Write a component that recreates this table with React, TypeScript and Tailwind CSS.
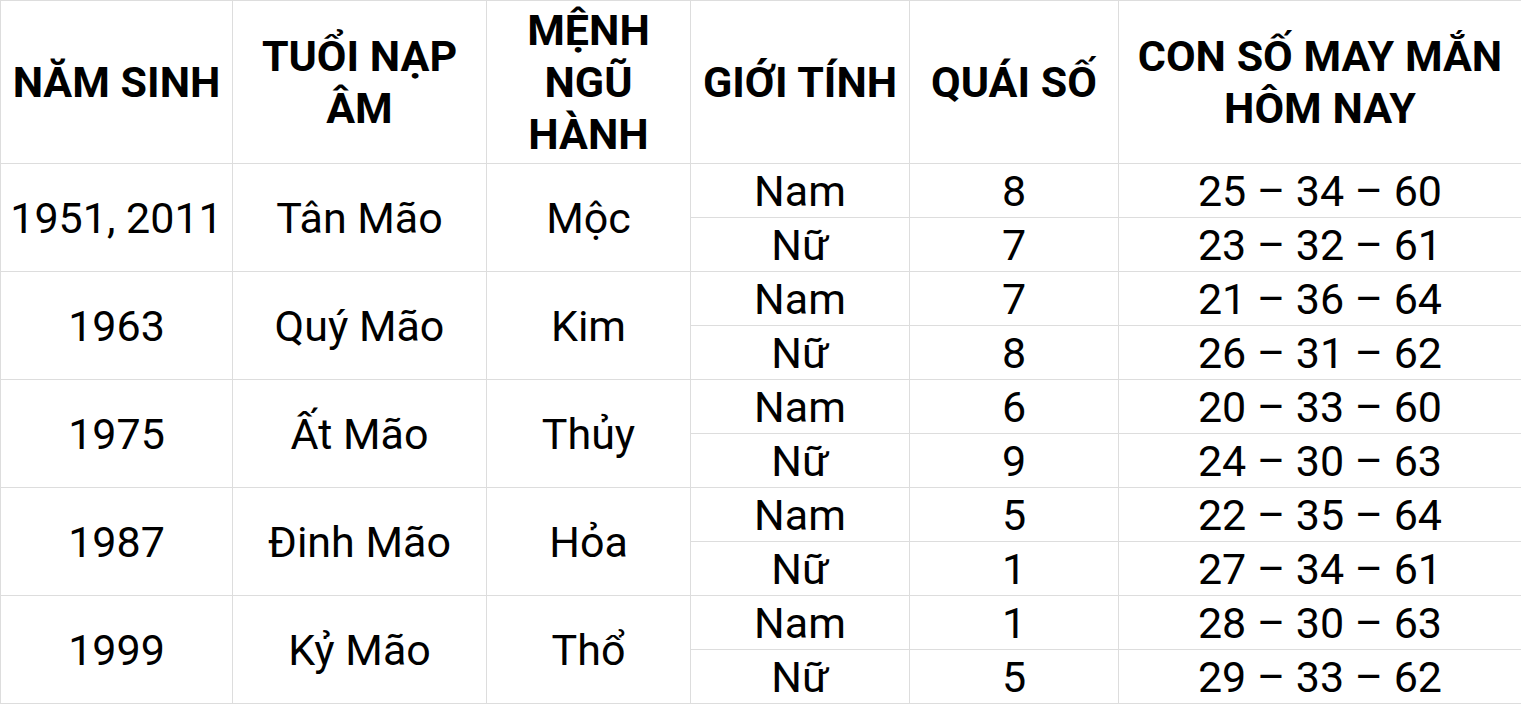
import React from "react";

const groups = [
  { year: "1951, 2011", tuoi: "Tân Mão", menh: "Mộc", rows: [["Nam", "8", "25 – 34 – 60"], ["Nữ", "7", "23 – 32 – 61"]] },
  { year: "1963", tuoi: "Quý Mão", menh: "Kim", rows: [["Nam", "7", "21 – 36 – 64"], ["Nữ", "8", "26 – 31 – 62"]] },
  { year: "1975", tuoi: "Ất Mão", menh: "Thủy", rows: [["Nam", "6", "20 – 33 – 60"], ["Nữ", "9", "24 – 30 – 63"]] },
  { year: "1987", tuoi: "Đinh Mão", menh: "Hỏa", rows: [["Nam", "5", "22 – 35 – 64"], ["Nữ", "1", "27 – 34 – 61"]] },
  { year: "1999", tuoi: "Kỷ Mão", menh: "Thổ", rows: [["Nam", "1", "28 – 30 – 63"], ["Nữ", "5", "29 – 33 – 62"]] },
];

export default function App() {
  const th = "border border-[#dddddd] px-1 text-center align-middle font-bold text-[43px] leading-[52px]";
  const td = "border border-[#dddddd] px-1 text-center align-middle font-normal text-[43px] leading-[52px] p-0";
  return (
    <div className="w-[1521px] h-[704px] bg-white text-black overflow-hidden" style={{ fontFamily: "Roboto, 'Noto Sans', sans-serif" }}>
      <table className="w-[1521px] table-fixed border-collapse">
        <colgroup>
          <col className="w-[232px]" />
          <col className="w-[254px]" />
          <col className="w-[204px]" />
          <col className="w-[219px]" />
          <col className="w-[209px]" />
          <col className="w-[403px]" />
        </colgroup>
        <thead>
          <tr className="h-[163px]">
            <th className={th}>NĂM SINH</th>
            <th className={th}>TUỔI NẠP ÂM</th>
            <th className={th}>MỆNH NGŨ HÀNH</th>
            <th className={th}>GIỚI TÍNH</th>
            <th className={th}>QUÁI SỐ</th>
            <th className={th}>CON SỐ MAY MẮN HÔM NAY</th>
          </tr>
        </thead>
        <tbody>
          {groups.map((g) => (
            <React.Fragment key={g.year}>
              <tr className="h-[54px]">
                <td rowSpan={2} className={td}>{g.year}</td>
                <td rowSpan={2} className={td}>{g.tuoi}</td>
                <td rowSpan={2} className={td}>{g.menh}</td>
                <td className={td}>{g.rows[0][0]}</td>
                <td className={td}>{g.rows[0][1]}</td>
                <td className={td}>{g.rows[0][2]}</td>
              </tr>
              <tr className="h-[54px]">
                <td className={td}>{g.rows[1][0]}</td>
                <td className={td}>{g.rows[1][1]}</td>
                <td className={td}>{g.rows[1][2]}</td>
              </tr>
            </React.Fragment>
          ))}
        </tbody>
      </table>
    </div>
  );
}
